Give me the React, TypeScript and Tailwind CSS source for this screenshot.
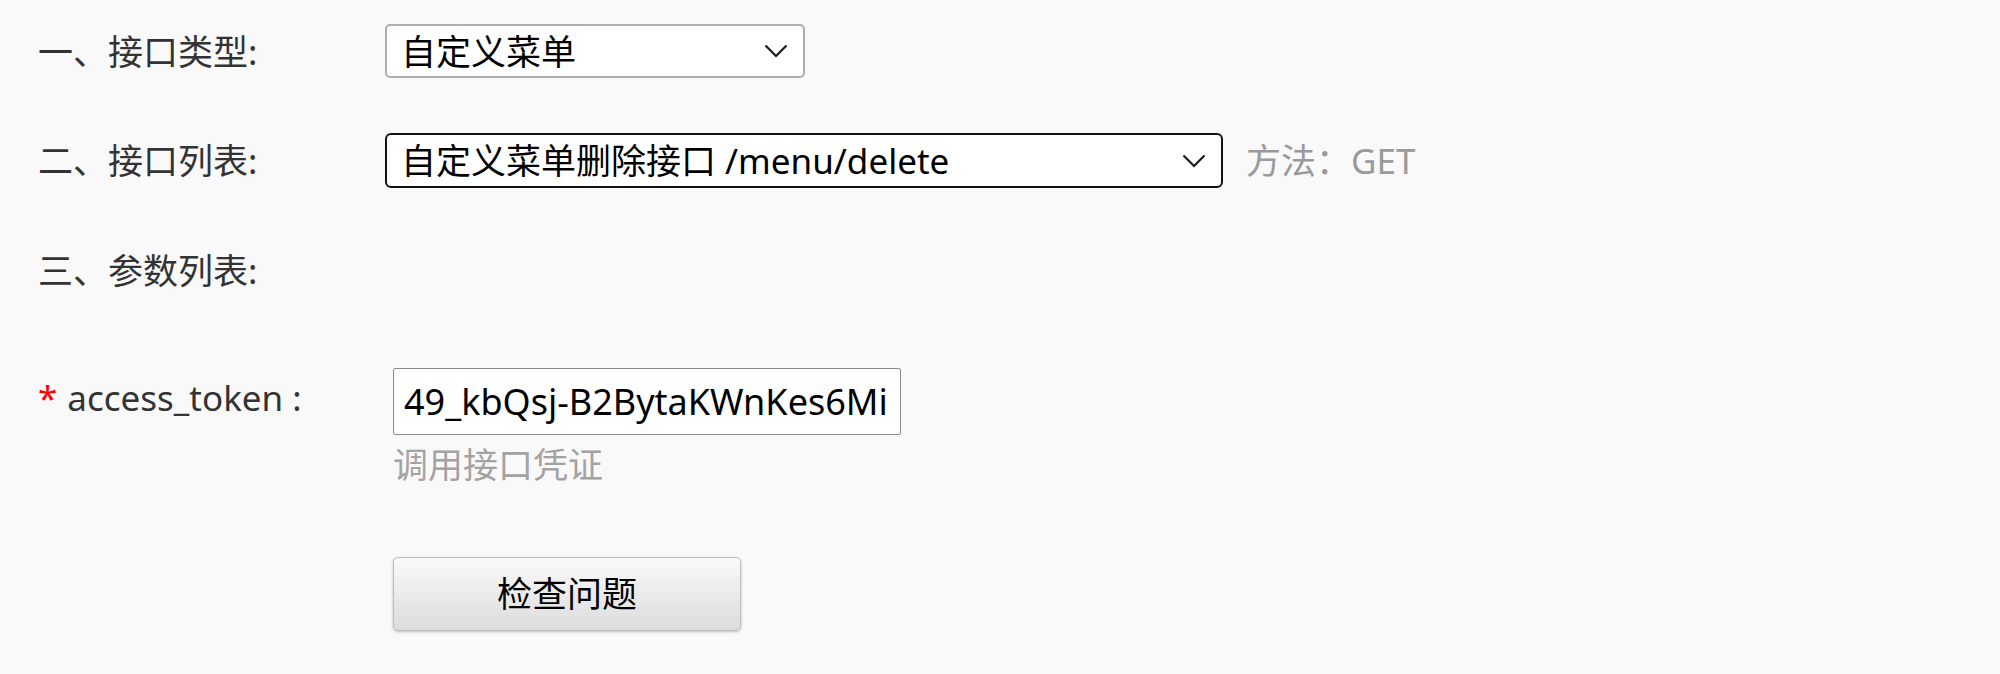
import React from 'react';

const font = 'font-["Noto_Sans","Noto_Sans_CJK_SC",sans-serif]';

const Chevron: React.FC = () => (
    <svg width="24" height="14" viewBox="0 0 24 14" fill="none" className="shrink-0">
        <polyline points="1.5,1.5 12,12 22.5,1.5" stroke="#1a1a1a" strokeWidth="2.2" />
    </svg>
);

interface FakeSelectProps {
    value: string;
    width: string;
    focused?: boolean;
}

const FakeSelect: React.FC<FakeSelectProps> = ({ value, width, focused }) => (
    <div
        className={`flex items-center justify-between bg-white pl-[14px] pr-[15px] text-[35px] leading-none text-black ${width} ${
            focused ? 'h-[55px] rounded-[6px] border-2 border-[#111111]' : 'h-[54px] rounded-[5px] border-2 border-[#adadad]'
        }`}
    >
        <span className="whitespace-nowrap">{value}</span>
        <Chevron />
    </div>
);

export default function App() {
    return (
        <div className={`min-h-[674px] w-full bg-[#f9f9f9] pl-[38px] pt-[24px] text-[#333333] ${font}`}>
            {/* 接口类型 */}
            <div className="flex h-[54px] items-center">
                <div className="w-[347px] text-[35px] leading-none">一、接口类型:</div>
                <FakeSelect value="自定义菜单" width="w-[420px]" />
            </div>

            {/* 接口列表 */}
            <div className="mt-[55px] flex h-[55px] items-center">
                <div className="w-[347px] text-[35px] leading-none">二、接口列表:</div>
                <FakeSelect value="自定义菜单删除接口 /menu/delete" width="w-[838px]" focused />
                <div className="ml-[23px] text-[35px] leading-none text-[#9a9a9a]">方法：GET</div>
            </div>

            {/* 参数列表 */}
            <div className="mt-[58px] flex h-[48px] items-center">
                <div className="text-[35px] leading-none">三、参数列表:</div>
            </div>

            {/* access_token */}
            <div className="mt-[74px] flex">
                <div className="flex h-[58px] w-[355px] items-center text-[35px] leading-none">
                    <span className="mr-[10px] text-[#ff0000]">*</span>
                    <span>access_token :</span>
                </div>
                <div className="flex flex-col">
                    <input
                        readOnly
                        defaultValue="49_kbQsj-B2BytaKWnKes6Mi"
                        className={`h-[67px] w-[508px] rounded-[2px] border border-[#8a8a8a] bg-white px-[10px] text-[36px] text-black outline-none ${font}`}
                    />
                    <div className="mt-[8px] text-[35px] leading-[44px] text-[#a3a3a3]">调用接口凭证</div>
                </div>
            </div>

            {/* 按钮 */}
            <div className="mt-[70px] pl-[355px]">
                <button
                    className={`h-[74px] w-[348px] rounded-[5px] border border-[#bdbdbd] bg-gradient-to-b from-[#fafafa] to-[#dcdcdc] text-[35px] text-black shadow-[0_1px_3px_rgba(0,0,0,0.25)] ${font}`}
                >
                    检查问题
                </button>
            </div>
        </div>
    );
}
